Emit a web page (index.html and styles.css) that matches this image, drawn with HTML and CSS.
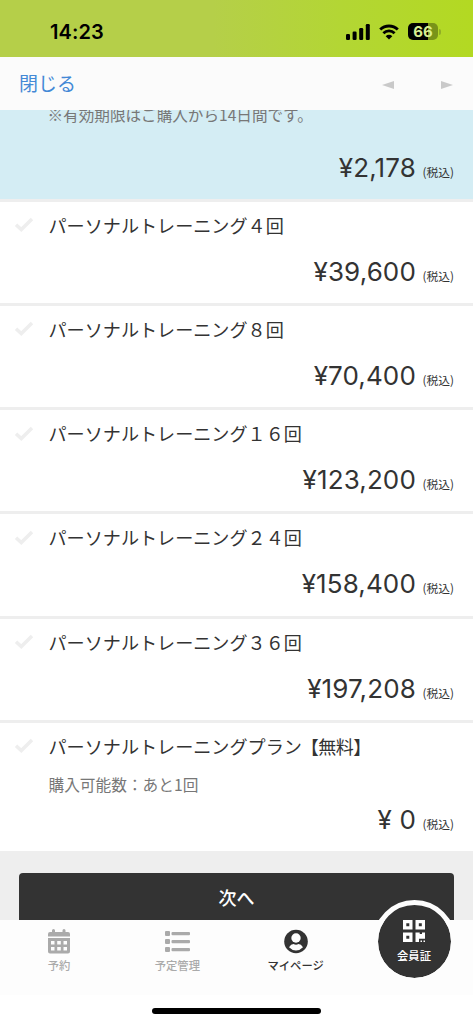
FILE: index.html
```html
<!DOCTYPE html>
<html lang="ja">
<head>
<meta charset="utf-8">
<title>プラン選択</title>
<link rel="stylesheet" href="styles.css">
</head>
<body>
<svg class="defs" width="0" height="0"><symbol id="check" viewBox="0 0 20 16"><path d="M2 7.7 7.3 12.6 18 2" fill="none" stroke="#eee" stroke-width="3.5"/></symbol></svg>
<div class="screen">
  <header class="status">
    <span class="time">14:23</span>
    <div class="indicators">
      <svg width="24" height="16" viewBox="0 0 24 16"><rect x="0" y="10" width="4" height="6" rx="1.2"/><rect x="6.6" y="7.5" width="4" height="8.5" rx="1.2"/><rect x="13.2" y="4" width="4" height="12" rx="1.2"/><rect x="19.8" y="0" width="4" height="16" rx="1.2"/></svg>
      <svg class="wifi" width="20" height="16" viewBox="0 0 20 16"><path d="M1.2 5.6a12.5 12.5 0 0 1 17.6 0M4.4 9.2a8 8 0 0 1 11.2 0" fill="none" stroke="#000" stroke-width="2.8"/><path d="M10 15.5 6.7 12.2a4.7 4.7 0 0 1 6.6 0Z"/></svg>
      <div class="battery">66</div><i class="cap"></i>
    </div>
  </header>
  <nav class="toolbar">
    <a class="close">閉じる</a>
    <svg class="arrows" width="71" height="8" viewBox="0 0 71 8"><path d="M0 4 12 0V8ZM71 4 59 0V8Z"/></svg>
  </nav>
  <main class="content">
    <section class="plan selected"><p class="note">※有効期限はご購入から14日間です。</p><p class="price">¥2,178<small>(税込)</small></p></section>
    <section class="plan"><svg class="check"><use href="#check"/></svg><h2>パーソナルトレーニング４回</h2><p class="price">¥39,600<small>(税込)</small></p></section>
    <section class="plan"><svg class="check"><use href="#check"/></svg><h2>パーソナルトレーニング８回</h2><p class="price">¥70,400<small>(税込)</small></p></section>
    <section class="plan"><svg class="check"><use href="#check"/></svg><h2>パーソナルトレーニング１６回</h2><p class="price">¥123,200<small>(税込)</small></p></section>
    <section class="plan"><svg class="check"><use href="#check"/></svg><h2>パーソナルトレーニング２４回</h2><p class="price">¥158,400<small>(税込)</small></p></section>
    <section class="plan"><svg class="check"><use href="#check"/></svg><h2>パーソナルトレーニング３６回</h2><p class="price">¥197,208<small>(税込)</small></p></section>
    <section class="plan free"><svg class="check"><use href="#check"/></svg><h2>パーソナルトレーニングプラン<span class="bracket">【無料】</span></h2><p class="limit">購入可能数：あと1回</p><p class="price">¥ 0<small>(税込)</small></p></section>
    <div class="action"><button class="next">次へ</button></div>
  </main>
  <nav class="tabs">
    <a class="tab"><svg width="22" height="25" viewBox="0 0 22 25"><path fill-rule="evenodd" d="M0 7.5V5Q0 3 2 3H4V1.5a1.5 1.5 0 0 1 3 0V3h7.500V1.500a1.500 1.500 0 0 1 3 0V3H20q2 0 2 2v2.500ZM0 9h22v13.500q0 2-2 2H2q-2 0-2-2ZM3 12v3.500h3.500V12Zm6.200 0v3.500h3.600V12Zm6.300 0v3.500H19V12ZM3 18v3.500h3.500V18Zm6.200 0v3.500h3.600V18Zm6.300 0v3.500H19V18Z"/></svg><span>予約</span></a>
    <a class="tab"><svg width="25" height="25" viewBox="0 0 25 25"><rect x="0" y="2" width="5" height="5" rx="1"/><rect x="0" y="10" width="5" height="5" rx="1"/><rect x="0" y="18" width="5" height="5" rx="1"/><rect x="6.500" y="3" width="18.500" height="3.200" rx="1"/><rect x="6.500" y="11" width="18.500" height="3.200" rx="1"/><rect x="6.500" y="19" width="18.500" height="3.200" rx="1"/></svg><span>予定管理</span></a>
    <a class="tab active"><svg width="24" height="25" viewBox="0 0 24 25"><circle cx="12" cy="12.500" r="11.800"/><circle cx="12" cy="9" r="4.700" fill="#fff"/><path d="M5 18.300Q7 15.100 9.500 15.100 12 16.200 14.500 15.100 17 15.100 19 18.300 16 21.500 12 21.500T5 18.300Z" fill="#fff"/></svg><span>マイページ</span></a>
    <a class="member"><svg width="22" height="22" viewBox="0 0 22 22"><path fill="#fff" fill-rule="evenodd" d="M0 0h9.500v9.500H0ZM3.300 3.300v3h3v-3ZM12.500 0H22v9.500h-9.500ZM15.800 3.300v3h3v-3ZM0 12.500h9.500V22H0ZM3.300 15.800v3h3v-3ZM12.500 12.500h4.200v1.500h2.300v-1.500h3v6.300h-6V22h-3.500ZM17.500 20.500H19V22h-1.500ZM20.500 20.500H22V22h-1.500Z"/></svg><span>会員証</span></a>
  </nav>
  <div class="home"><i></i></div>
</div>
</body>
</html>
```
FILE: styles.css
```css
* { box-sizing: border-box; }
body, p, h2 { margin: 0; }
body { font-family: Inter, "Noto Sans CJK JP", sans-serif; color: #333; background: #fff; }
.defs { position: absolute; }
.screen { width: 473px; height: 1024px; display: flex; flex-direction: column; overflow: hidden; }
.status { height: 57px; flex: none; display: flex; align-items: flex-start; justify-content: space-between; padding: 20px 32px 0 50px; background: linear-gradient(90deg, #b5cf49 0 45%, #b3d634 72%, #b3d922); color: #000; }
.time { font-size: 20px; line-height: 24px; font-weight: 600; letter-spacing: .1px; }
.indicators { display: flex; align-items: center; height: 23px; }
.wifi { margin: 0 9px 0 9px; }
.battery { width: 30px; height: 17px; border-radius: 5px; background: linear-gradient(90deg, #000 68%, #799319 68%); color: #d8ee91; text-align: center; font: 700 15px/17px Inter, sans-serif; }
.cap { width: 2px; height: 6px; margin-left: 1px; border-radius: 0 2px 2px 0; background: #91ae25; }
.toolbar { height: 53px; flex: none; display: flex; align-items: center; justify-content: space-between; padding: 0 20px 0 19px; background: #fbfbfb; }
.close { color: #4389d6; font-size: 19px; line-height: 28px; margin-top: 3px; }
.arrows { fill: #c9c9c9; margin-top: 3px; }
.content { height: 809.5px; flex: none; overflow: hidden; background: #eee; }
.plan { height: 104.3px; display: flex; flex-wrap: wrap; align-content: flex-start; border-top: 3px solid #eee; background: #fff; padding: 10px 19px 0 14px; }
.plan.selected { height: 88.5px; border: 0; padding-top: 0; background: #d4edf4; }
.check { width: 20px; height: 16px; margin: 5.5px 14.5px 0 0; flex: none; }
h2 { flex: 1; height: 26px; white-space: nowrap; font: 400 18.100px/26px "Noto Sans CJK JP", sans-serif; }
.bracket { letter-spacing: -.6px; margin-left: -1px; }
.price { width: 100%; height: 36px; margin-top: 16px; text-align: right; font-size: 26px; line-height: 36px; letter-spacing: .12px; }
.price small { margin-left: 6.500px; font: 400 11.800px/18px "Noto Sans CJK JP", sans-serif; letter-spacing: 0; }
.note, .limit { width: 100%; padding-left: 34.500px; color: #777; font-size: 15.700px; line-height: 24px; height: 24px; font-family: "Noto Sans CJK JP", sans-serif; }
.note { margin-top: -8px; padding-left: 33.500px; font-size: 15.600px; }
.selected .price { margin-top: 24px; }
.free { height: 131px; }
.limit { margin-top: 14px; }
.free .price { margin-top: 5px; }
.action { padding: 22px 19px 0; }
.next { display: block; width: 100%; height: 50px; border: 0; border-radius: 4px; background: #333; color: #fff; font: 500 18px/46px "Noto Sans CJK JP", sans-serif; padding: 0 0 2px; }
.tabs { height: 75px; flex: none; display: flex; background: #fdfdfd; position: relative; }
.tab { width: 118.250px; padding-top: 9px; display: flex; flex-direction: column; align-items: center; color: #aaa; fill: #aaa; font: 500 11.300px/18px "Noto Sans CJK JP", sans-serif; }
.tab span { margin-top: 2px; }
.active { color: #333; fill: #333; }
.member { position: absolute; left: 372.500px; top: -19.500px; width: 83px; height: 83px; border: 5px solid #fdfdfd; border-radius: 50%; background: #333; background-clip: padding-box; color: #fff; display: flex; flex-direction: column; align-items: center; padding-top: 15px; font: 500 11.300px/18px "Noto Sans CJK JP", sans-serif; }
.member span { margin-top: 4px; }
.home { flex: 1; display: flex; justify-content: center; padding-top: 13.500px; background: #fff; }
.home i { width: 169px; height: 6px; border-radius: 3px; background: #000; }
```
